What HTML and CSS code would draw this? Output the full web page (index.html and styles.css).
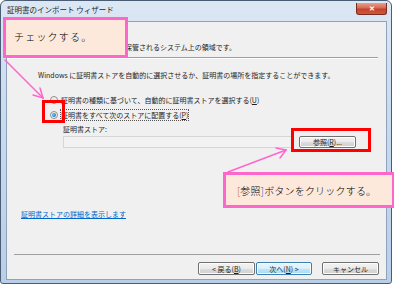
FILE: index.html
```html
<!DOCTYPE html>
<html lang="ja">
<head>
<meta charset="UTF-8">
<title>証明書のインポート ウィザード</title>
<link rel="stylesheet" href="styles.css">
</head>
<body>
<div class="screen">
  <div class="window">
    <div class="titlebar">
      <span class="title">証明書のインポート ウィザード</span>
      <span class="close">✕</span>
    </div>
    <div class="client">
      <div class="header">
        <div class="header-sub">証明書ストアは、証明書が保管されるシステム上の領域です。</div>
      </div>
      <div class="separator"></div>
      <div class="content">
        <p class="intro">Windows に証明書ストアを自動的に選択させるか、証明書の場所を指定することができます。</p>
        <div class="options">
          <div class="option"><span class="radio"></span>証明書の種類に基づいて、自動的に証明書ストアを選択する(<u>U</u>)</div>
          <div class="option"><span class="radio checked"></span><span class="focus">証明書をすべて次のストアに配置する(<u>P</u>)</span></div>
          <div class="store">
            <div class="store-label">証明書ストア:</div>
            <div class="store-row">
              <div class="field"></div>
              <button class="btn">参照(<u>R</u>)...</button>
            </div>
          </div>
        </div>
        <a class="more" href="#">証明書ストアの詳細を表示します</a>
      </div>
      <div class="footer">
        <button class="btn">&lt; 戻る(<u>B</u>)</button>
        <button class="btn default">次へ(<u>N</u>) &gt;</button>
        <button class="btn cancel">キャンセル</button>
      </div>
    </div>
  </div>

  <!-- annotations -->
  <div class="callout callout-check">チェックする。</div>
  <div class="callout callout-browse"><span class="br-open">[</span>参照<span class="br-close">]</span>ボタンをクリックする。</div>
  <div class="mark mark-radio"></div>
  <div class="mark mark-button"></div>
  <svg class="arrows" width="394" height="287" viewBox="0 0 394 287">
    <g stroke="#ff66cc" stroke-width="1.5" fill="none" stroke-linecap="round">
      <line x1="5" y1="60" x2="43" y2="98"/>
      <polyline points="33,95 43,98 40,88"/>
      <line x1="228" y1="172" x2="286" y2="150"/>
      <polyline points="276,148 286,150 280,158"/>
    </g>
  </svg>
</div>
</body>
</html>
```

FILE: styles.css
```css
body {
  margin: 0;
  background: #ffffff;
  font-family: "Noto Sans CJK JP", "Noto Sans", sans-serif;
  color: #1e1e1e;
}

.screen {
  position: relative;
  width: 394px;
  height: 287px;
  overflow: hidden;
}

/* Window frame */
.window {
  box-sizing: border-box;
  width: 392px;
  height: 284px;
  border: 1px solid #4a5d75;
  border-radius: 6px 6px 3px 3px;
  background: linear-gradient(180deg, #dce7f4 0%, #c9dbef 40%, #b9cfe8 100%);
  padding: 0 4px 3px 5px;
  display: flex;
  flex-direction: column;
}

.titlebar {
  height: 20px;
  display: flex;
  justify-content: space-between;
  align-items: flex-start;
  flex-shrink: 0;
}

.title {
  font-size: 7.5px;
  line-height: 10px;
  padding: 4px 0 0 1px;
  color: #1e1e1e;
}

.close {
  width: 29px;
  height: 11px;
  margin-top: 2px;
  border: 1px solid #7a2a1e;
  border-top: none;
  border-radius: 0 0 3px 3px;
  background: linear-gradient(180deg, #e99d8c 0%, #d66b52 45%, #c2422a 55%, #d0583c 100%);
  color: #ffffff;
  font-size: 7px;
  line-height: 11px;
  text-align: center;
  font-weight: bold;
}

.client {
  flex: 1;
  background: #f0f0f0;
  border: 1px solid #8ea3bb;
  display: flex;
  flex-direction: column;
}

/* Header */
.header {
  height: 35px;
  box-sizing: border-box;
  padding: 20px 0 0 34px;
  font-size: 7px;
  line-height: 10px;
}

.separator {
  border-top: 1px solid #a0a0a0;
  border-bottom: 1px solid #ffffff;
  margin-right: 8px;
}

/* Content */
.content {
  flex: 1;
  padding: 0 8px 0 14px;
  font-size: 7px;
  line-height: 10px;
}

.intro {
  margin: 11px 0 0 17px;
  color: #1e1e1e;
}

.options {
  margin: 15px 0 0 29px;
}

.option {
  display: flex;
  align-items: center;
  height: 10px;
  margin-bottom: 5px;
}

.radio {
  box-sizing: border-box;
  width: 8px;
  height: 8px;
  border: 1px solid #8e8f8f;
  border-radius: 50%;
  background: radial-gradient(circle, #e6e6e6 0%, #f7f7f7 100%);
  margin-right: 3px;
  position: relative;
}

.radio.checked::after {
  content: "";
  position: absolute;
  left: 1px;
  top: 1px;
  width: 4px;
  height: 4px;
  border-radius: 50%;
  background: radial-gradient(circle at 40% 40%, #7cc3f2 0%, #1a6db5 80%);
}

.focus {
  outline: 1px dotted #555555;
}

.store {
  margin-left: 13px;
}

.store-label {
  margin-top: -1px;
  height: 10px;
}

.store-row {
  display: flex;
  align-items: center;
  gap: 6px;
  margin-top: 2px;
}

.field {
  box-sizing: border-box;
  width: 230px;
  height: 12px;
  border: 1px solid #d6d6d6;
  background: #f2f2f2;
}

.btn {
  box-sizing: border-box;
  height: 12px;
  padding: 0;
  font-family: inherit;
  font-size: 7px;
  line-height: 10px;
  color: #1e1e1e;
  border: 1px solid #707070;
  border-radius: 2px;
  background: linear-gradient(180deg, #f2f2f2 0%, #ebebeb 50%, #dddddd 51%, #cfcfcf 100%);
  box-shadow: inset 0 0 0 1px #fcfcfc;
}

.store-row .btn {
  width: 57px;
}

.more {
  display: inline-block;
  margin-top: 61px;
  color: #0066cc;
  text-decoration: underline;
}

/* Footer buttons */
.footer {
  display: flex;
  justify-content: flex-end;
  gap: 1px;
  margin: 0 6px 0 7px;
  padding: 7px 1px 0 0;
  height: 25px;
  box-sizing: border-box;
  border-top: 1px solid #a0a0a0;
}

.footer .btn {
  width: 57px;
  height: 13px;
}

.footer .default {
  width: 56px;
  border-color: #3c7fb1;
  background: linear-gradient(180deg, #eaf6fd 0%, #d9f0fc 50%, #bee6fd 51%, #a7d9f5 100%);
}

.footer .cancel {
  margin-left: 9px;
}

/* Annotations laid over the window */
.callout {
  position: absolute;
  box-sizing: border-box;
  background: #fde9db;
  border: 3px solid #ff66cc;
  color: #000000;
  font-size: 10px;
  line-height: 14px;
  font-weight: 300;
}

.callout-check {
  left: 3px;
  top: 17px;
  width: 125px;
  height: 41px;
  padding: 10px 0 0 8px;
  letter-spacing: 1.2px;
}

.callout-browse {
  left: 223px;
  top: 172px;
  width: 172px;
  height: 36px;
  padding: 9px 0 0 11px;
  letter-spacing: 0.2px;
}

.br-open {
  color: #c05a10;
}

.br-close {
  color: #2050b0;
}

.mark {
  position: absolute;
  box-sizing: border-box;
  border: 3px solid #ff0000;
}

.mark-radio {
  left: 42px;
  top: 100px;
  width: 23px;
  height: 23px;
}

.mark-button {
  left: 291px;
  top: 128px;
  width: 80px;
  height: 24px;
}

.arrows {
  position: absolute;
  left: 0;
  top: 0;
  pointer-events: none;
}
```
